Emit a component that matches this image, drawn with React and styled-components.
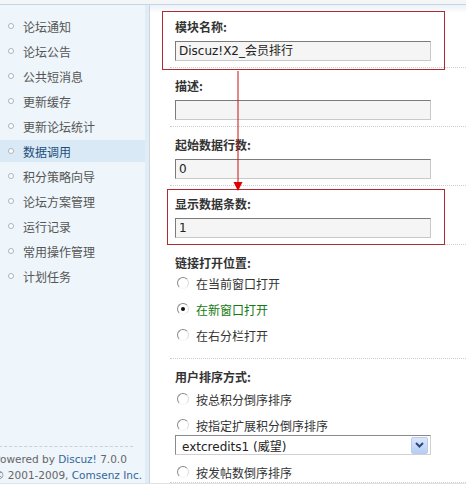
import styled, { createGlobalStyle } from "styled-components";

const menu = [
  "论坛通知",
  "论坛公告",
  "公共短消息",
  "更新缓存",
  "更新论坛统计",
  "数据调用",
  "积分策略向导",
  "论坛方案管理",
  "运行记录",
  "常用操作管理",
  "计划任务",
];

export default function App() {
  return (
    <>
      <GlobalStyle />
      <Frame>
        <Sidebar>
          <Menu>
            {menu.map((item) => (
              <MenuItem key={item} $active={item === "数据调用"}>
                <Bullet />
                {item}
              </MenuItem>
            ))}
          </Menu>
          <Footer>
            <div>
              Powered by <Link>Discuz!</Link> 7.0.0
            </div>
            <div>
              © 2001-2009, <Link>Comsenz Inc.</Link>
            </div>
          </Footer>
        </Sidebar>
        <Main>
          <Row $hl={{ top: 2, left: -8, right: 21, bottom: -3 }}>
            <Label>模块名称:</Label>
            <Input>Discuz!X2_会员排行</Input>
          </Row>
          <Row>
            <Label>描述:</Label>
            <Input />
          </Row>
          <Row>
            <Label>起始数据行数:</Label>
            <Input>0</Input>
          </Row>
          <Row $hl={{ top: 3, left: -3, right: 21, bottom: -1 }}>
            <Label>显示数据条数:</Label>
            <Input>1</Input>
          </Row>
          <Row $pb={13}>
            <Label $mb={1}>链接打开位置:</Label>
            <Radio>
              <RadioDot />在当前窗口打开
            </Radio>
            <Radio $mt={6} $checked>
              <RadioDot $checked />在新窗口打开
            </Radio>
            <Radio $mt={6}>
              <RadioDot />在右分栏打开
            </Radio>
          </Row>
          <Row $pb={0}>
            <Label $mb={1}>用户排序方式:</Label>
            <Radio $mt={2}>
              <RadioDot />按总积分倒序排序
            </Radio>
            <Radio $mt={6}>
              <RadioDot />按指定扩展积分倒序排序
            </Radio>
            <Select>
              <span>extcredits1 (威望)</span>
              <SelectButton>
                <svg width="9" height="6" viewBox="0 0 9 6">
                  <path d="M1 1l3.5 3.5L8 1" fill="none" stroke="#2c4a7c" strokeWidth="2" />
                </svg>
              </SelectButton>
            </Select>
            <Radio $mt={7}>
              <RadioDot />按发帖数倒序排序
            </Radio>
          </Row>
          <Arrow width="10" height="124" viewBox="0 0 10 124">
            <line x1="5" y1="0" x2="5" y2="112" stroke="#c81010" strokeWidth="1" />
            <polygon points="0.5,111 9.5,111 5,120" fill="#e00000" />
          </Arrow>
        </Main>
      </Frame>
    </>
  );
}

const GlobalStyle = createGlobalStyle`
  html, body {
    margin: 0;
    background: #fff;
    overflow: hidden;
  }
  body {
    font-family: "Noto Sans CJK SC", sans-serif;
    font-size: 12px;
    color: #333;
  }
`;

const Frame = styled.div`
  display: flex;
  height: 478px;
  border-top: 4px solid #f3f5f7;
  border-bottom: 2px solid #fff;
  box-shadow: inset 0 1px 0 #c6d5e2, inset 0 -1px 0 #dde3e8;
  padding: 1px 0;
  overflow: hidden;
`;

const Sidebar = styled.div`
  width: 145px;
  flex-shrink: 0;
  display: flex;
  flex-direction: column;
  background: #eef5fb;
  border-right: 4px solid #e0edf7;
  box-shadow: 1px 0 0 #c9d5df;
  margin-right: 1px;
  overflow: hidden;
`;

const Menu = styled.div`
  padding-top: 10px;
`;

const MenuItem = styled.div`
  display: flex;
  align-items: center;
  height: 22px;
  margin-bottom: 3px;
  padding-left: 8px;
  gap: 9px;
  font-size: 12px;
  color: ${(p) => (p.$active ? "#1d4f7c" : "#555")};
  background: ${(p) => (p.$active ? "#d9e9f5" : "transparent")};
`;

const Bullet = styled.span`
  width: 4px;
  height: 4px;
  border-radius: 50%;
  border: 1px solid #a9b4bd;
  background: #fff;
`;

const Footer = styled.div`
  margin-top: auto;
  margin-right: 12px;
  margin-left: -6px;
  padding: 4px 0 0 0;
  border-top: 1px dashed #c6d3de;
  font-family: "DejaVu Sans", sans-serif;
  font-size: 10.5px;
  line-height: 16px;
  color: #666;
  white-space: nowrap;
`;

const Link = styled.span`
  color: #336699;
`;

const Main = styled.div`
  position: relative;
  flex: 1;
  padding: 4px 0 0 20px;
  background: linear-gradient(#e9f1f8, #fff 8px);
`;

const Row = styled.div`
  position: relative;
  display: flex;
  flex-direction: column;
  align-items: flex-start;
  padding: 9px 0 ${(p) => (p.$pb ?? 6)}px 5px;
  border-bottom: 1px dotted #cfcfcf;
  ${(p) =>
    p.$hl &&
    `
    &::after {
      content: "";
      position: absolute;
      top: ${p.$hl.top}px;
      left: ${p.$hl.left}px;
      right: ${p.$hl.right}px;
      bottom: ${p.$hl.bottom}px;
      border: 1px solid #b02a30;
      pointer-events: none;
    }
  `}
`;

const Label = styled.div`
  font-weight: bold;
  font-size: 12px;
  line-height: 18px;
  color: #333;
  margin-bottom: ${(p) => p.$mb ?? 5}px;
`;

const Input = styled.div`
  box-sizing: border-box;
  width: 256px;
  height: 20px;
  padding: 0 3px;
  border: 1px solid;
  border-color: #7b7b7b #c9c9c9 #c9c9c9 #7b7b7b;
  background: #f5f5f5;
  font-family: "DejaVu Sans", "Noto Sans CJK SC", sans-serif;
  font-size: 12px;
  line-height: 18px;
  color: #222;
`;

const Radio = styled.div`
  display: flex;
  align-items: center;
  height: 20px;
  margin-top: ${(p) => p.$mt ?? 0}px;
  padding-left: 2px;
  gap: 7px;
  font-size: 12px;
  color: ${(p) => (p.$checked ? "#117a11" : "#333")};
`;

const RadioDot = styled.span`
  position: relative;
  box-sizing: border-box;
  width: 12px;
  height: 12px;
  border-radius: 50%;
  border: 1px solid;
  border-color: #8a8a8a #dcdcdc #f4f4f4 #8a8a8a;
  background: #fff;
  &::after {
    content: "";
    display: ${(p) => (p.$checked ? "block" : "none")};
    position: absolute;
    left: 3px;
    top: 3px;
    width: 4px;
    height: 4px;
    border-radius: 50%;
    background: #111;
  }
`;

const Select = styled.div`
  box-sizing: border-box;
  display: flex;
  align-items: center;
  justify-content: space-between;
  width: 256px;
  height: 20px;
  padding: 0 2px 0 6px;
  border: 1px solid #8a8a8a;
  border-right-color: #d0d0d0;
  border-bottom-color: #d0d0d0;
  background: #fff;
  font-family: "DejaVu Sans", "Noto Sans CJK SC", sans-serif;
  font-size: 12px;
  color: #222;
`;

const SelectButton = styled.span`
  display: flex;
  align-items: center;
  justify-content: center;
  width: 15px;
  height: 15px;
  background: linear-gradient(#dbe6fb, #b8cdf4);
  border: 1px solid #b9ccf0;
  border-radius: 2px;
`;

const Arrow = styled.svg`
  position: absolute;
  left: 83px;
  top: 66px;
`;
